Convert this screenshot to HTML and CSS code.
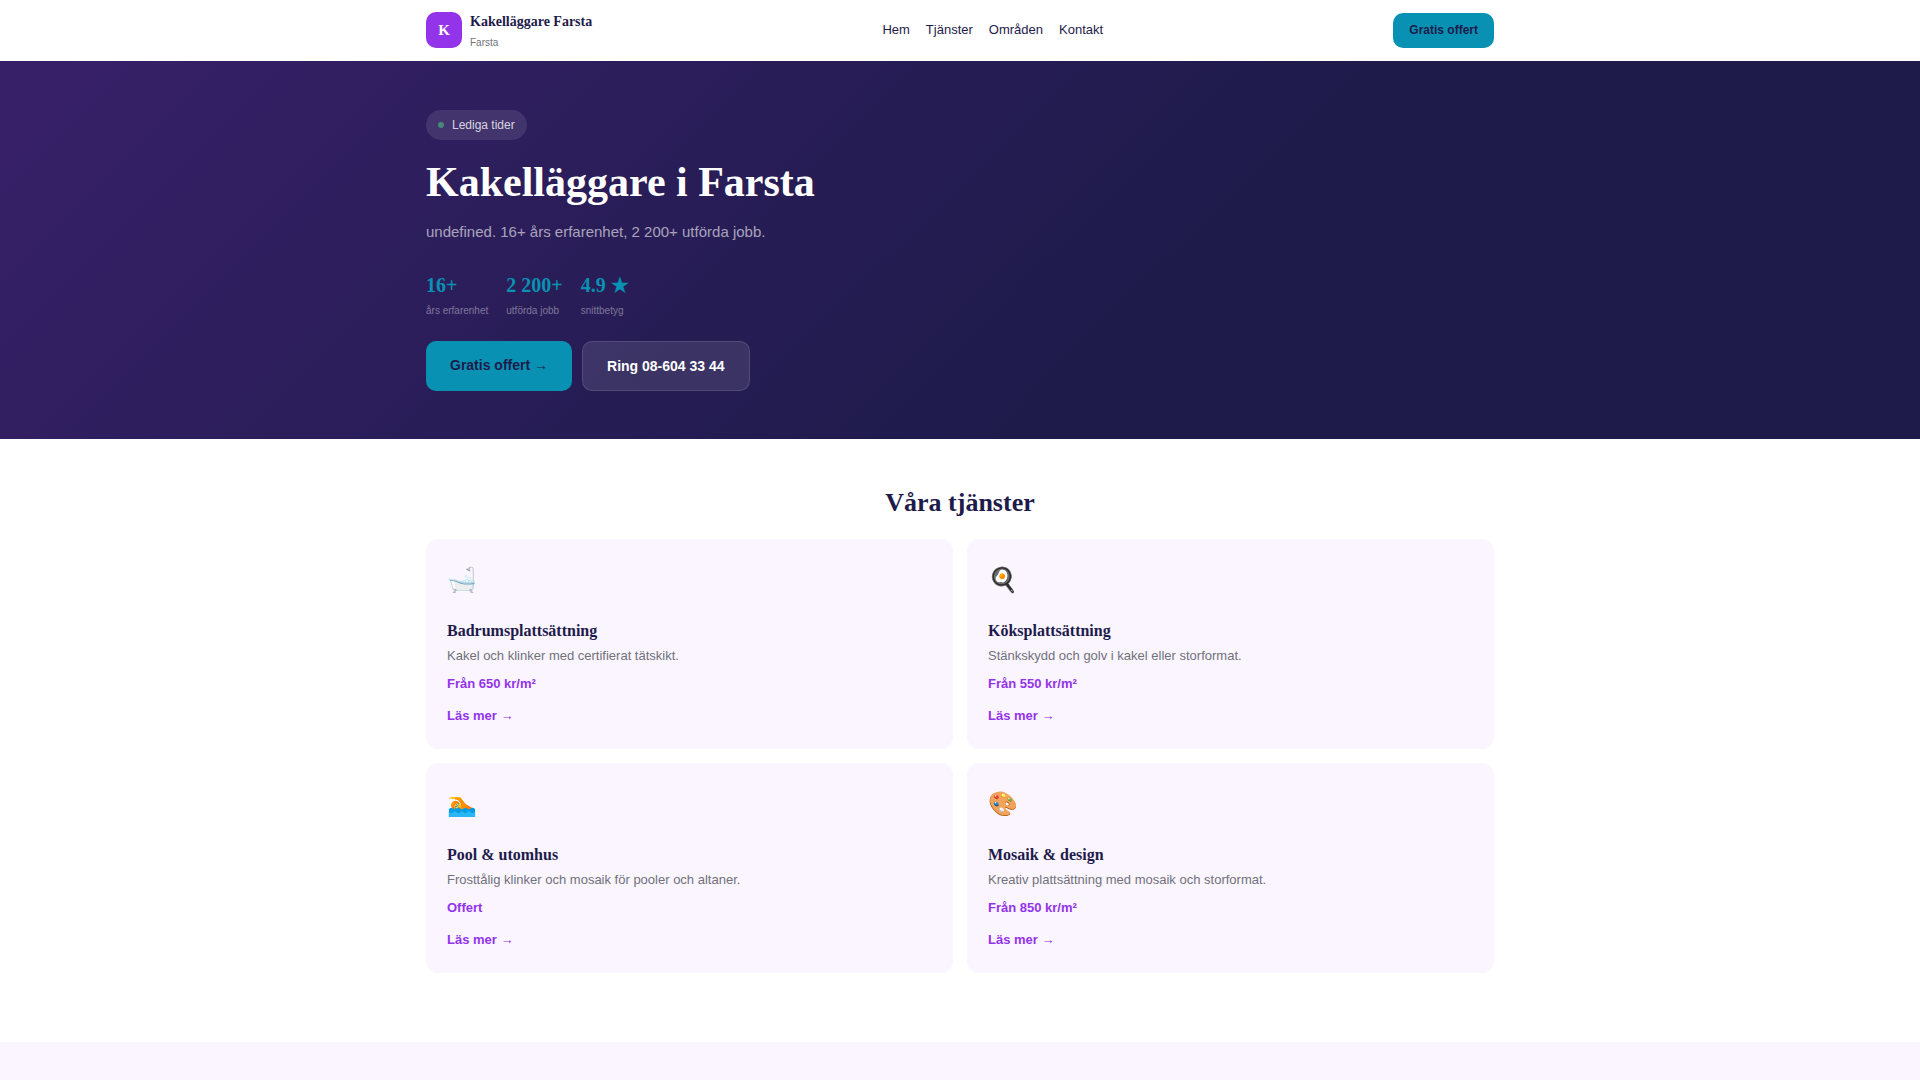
FILE: index.html
```html
<!DOCTYPE html>
<html lang="sv">

<head>
    <meta charset="UTF-8">
    <meta name="viewport" content="width=device-width, initial-scale=1.0">
    <title>Kakelläggare i Farsta</title>
    <link rel="stylesheet" href="styles.css">
</head>

<body>
    <header class="header">
        <div class="container header-inner">
            <a href="#" class="logo">
                <span class="logo-icon">K</span>
                <span class="logo-text">
                    <strong>Kakelläggare Farsta</strong>
                    <small>Farsta</small>
                </span>
            </a>
            <nav class="nav">
                <a href="#">Hem</a>
                <a href="#tjanster">Tjänster</a>
                <a href="#omraden">Områden</a>
                <a href="#kontakt">Kontakt</a>
            </nav>
            <a href="#kontakt" class="header-cta">Gratis offert</a>
        </div>
    </header>

    <section class="hero">
        <div class="container">
            <div class="badge"><span class="dot"></span>Lediga tider</div>
            <h1>Kakelläggare i Farsta</h1>
            <p class="lead">undefined. 16+ års erfarenhet, 2 200+ utförda jobb.</p>
            <div class="stats">
                <div><strong>16+</strong><span>års erfarenhet</span></div>
                <div><strong>2 200+</strong><span>utförda jobb</span></div>
                <div><strong>4.9 ★</strong><span>snittbetyg</span></div>
            </div>
            <div class="actions">
                <a href="#kontakt" class="btn btn-primary">Gratis offert →</a>
                <a href="tel:086043344" class="btn btn-ghost">Ring 08-604 33 44</a>
            </div>
        </div>
    </section>

    <section class="services" id="tjanster">
        <div class="container">
            <h2>Våra tjänster</h2>
            <div class="grid">
                <article class="card">
                    <div class="icon">🛁</div>
                    <h3>Badrumsplattsättning</h3>
                    <p>Kakel och klinker med certifierat tätskikt.</p>
                    <div class="price">Från 650 kr/m²</div>
                    <a href="#">Läs mer →</a>
                </article>
                <article class="card">
                    <div class="icon">🍳</div>
                    <h3>Köksplattsättning</h3>
                    <p>Stänkskydd och golv i kakel eller storformat.</p>
                    <div class="price">Från 550 kr/m²</div>
                    <a href="#">Läs mer →</a>
                </article>
                <article class="card">
                    <div class="icon">🏊</div>
                    <h3>Pool &amp; utomhus</h3>
                    <p>Frosttålig klinker och mosaik för pooler och altaner.</p>
                    <div class="price">Offert</div>
                    <a href="#">Läs mer →</a>
                </article>
                <article class="card">
                    <div class="icon">🎨</div>
                    <h3>Mosaik &amp; design</h3>
                    <p>Kreativ plattsättning med mosaik och storformat.</p>
                    <div class="price">Från 850 kr/m²</div>
                    <a href="#">Läs mer →</a>
                </article>
            </div>
        </div>
    </section>

    <section class="areas" id="omraden"></section>
</body>

</html>
```
FILE: styles.css
```css
* {
    margin: 0;
    padding: 0;
    box-sizing: border-box;
}

body {
    font-family: "Liberation Sans", Arial, sans-serif;
    font-size: 16px;
    line-height: 26px;
    color: #1e1b4b;
    background: #fff;
}

a {
    color: inherit;
    text-decoration: none;
}

h1,
h2,
h3,
.logo-icon,
.logo strong,
.stats strong {
    font-family: "Liberation Serif", "Times New Roman", serif;
    font-weight: 700;
}

.container {
    max-width: 1100px;
    margin: 0 auto;
    padding: 0 16px;
}

.header {
    border-bottom: 1px solid #fff;
}

.header-inner {
    display: flex;
    align-items: center;
    justify-content: space-between;
    height: 60px;
}

.logo {
    display: flex;
    align-items: center;
    gap: 8px;
}

.logo-icon {
    width: 36px;
    height: 36px;
    border-radius: 10px;
    background: #9333ea;
    color: #fff;
    font-size: 15px;
    line-height: 36px;
    text-align: center;
}

.logo strong {
    display: block;
    font-size: 14px;
    line-height: 26px;
}

.logo small {
    display: block;
    font-size: 10px;
    line-height: 16px;
    color: #71717a;
}

.nav {
    display: flex;
    gap: 16px;
    font-size: 13px;
}

.header-cta {
    padding: 8px 16px;
    border-radius: 10px;
    background: #0891b2;
    font-size: 12px;
    font-weight: 700;
    line-height: 19px;
}

.hero {
    padding: 49px 0 48px;
    background: linear-gradient(135deg, #382069, #1e1b4b 60%);
    color: #fff;
}

.badge {
    display: inline-flex;
    align-items: center;
    gap: 8px;
    padding: 5px 12px;
    border-radius: 20px;
    background: rgba(255, 255, 255, 0.1);
    color: rgba(255, 255, 255, 0.8);
    font-size: 12px;
    line-height: 20px;
}

.dot {
    width: 6px;
    height: 6px;
    border-radius: 50%;
    background: #4ade80;
    opacity: 0.5;
}

.hero h1 {
    margin: 19px 0 14px;
    font-size: 42px;
    line-height: 46px;
}

.lead {
    margin-bottom: 24px;
    font-size: 15px;
    color: rgba(255, 255, 255, 0.6);
}

.stats {
    display: flex;
    gap: 18px;
    margin-bottom: 20px;
}

.stats strong {
    display: block;
    font-size: 20px;
    line-height: 32px;
    color: #0891b2;
}

.stats span {
    display: block;
    font-size: 10px;
    line-height: 20px;
    color: rgba(255, 255, 255, 0.4);
}

.actions {
    display: flex;
    gap: 10px;
}

.btn {
    padding: 12px 24px;
    border-radius: 10px;
    font-size: 14px;
    font-weight: 700;
    line-height: 24px;
}

.btn-primary {
    background: #0891b2;
    color: #1e1b4b;
}

.btn-ghost {
    border: 1px solid rgba(255, 255, 255, 0.12);
    background: rgba(255, 255, 255, 0.1);
}

.services {
    padding: 48px 0 69px;
}

.services h2 {
    margin-bottom: 20px;
    font-size: 26px;
    line-height: 32px;
    text-align: center;
}

.grid {
    display: grid;
    grid-template-columns: 1fr 1fr;
    gap: 14px;
}

.card {
    padding: 20px;
    border: 1px solid #faf5ff;
    border-radius: 12px;
    background: #faf5ff;
    font-size: 13px;
}

.icon {
    margin-bottom: 18px;
    font-size: 24px;
    line-height: 40px;
}

.card h3 {
    font-size: 16px;
}

.card p {
    line-height: 24px;
    color: #71717a;
}

.price,
.card a {
    font-weight: 700;
    color: #9333ea;
}

.price {
    margin: 6px 0 10px;
    line-height: 20px;
}

.card a {
    display: block;
    line-height: 24px;
}

.areas {
    min-height: 200px;
    background: #faf5ff;
}
```
